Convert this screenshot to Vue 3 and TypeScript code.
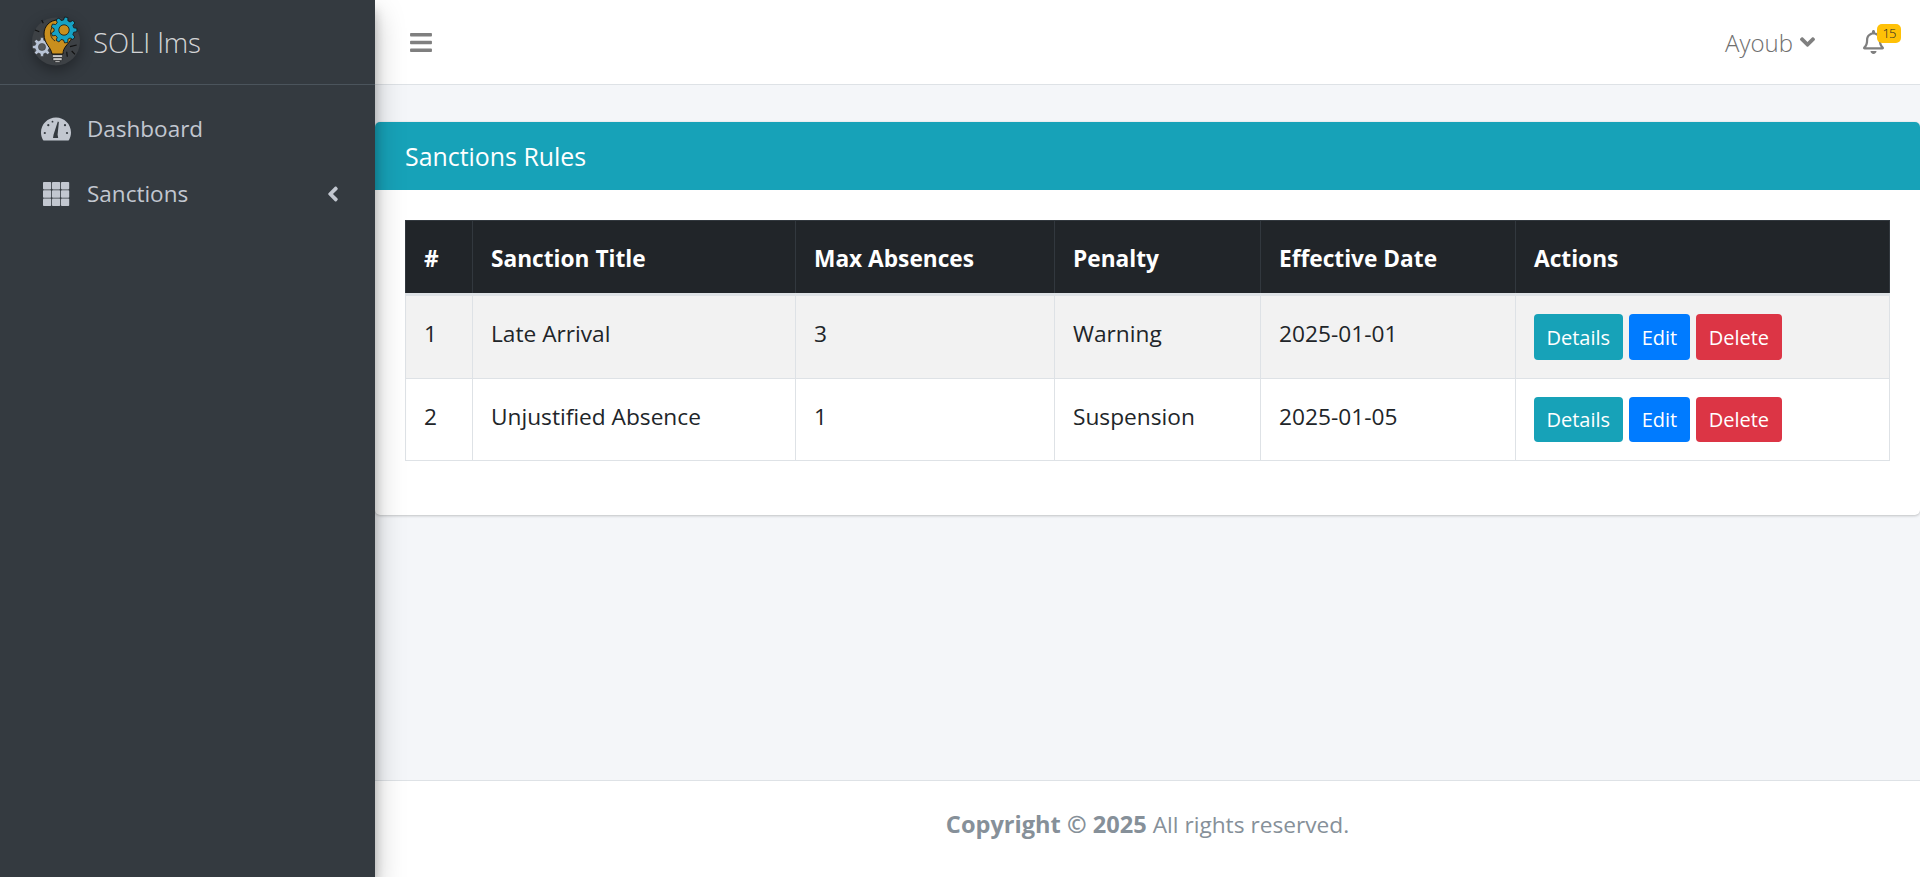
<script setup lang="ts">
interface Rule { id: number; title: string; max: number; penalty: string; date: string }
const rules: Rule[] = [
  { id: 1, title: 'Late Arrival', max: 3, penalty: 'Warning', date: '2025-01-01' },
  { id: 2, title: 'Unjustified Absence', max: 1, penalty: 'Suspension', date: '2025-01-05' },
]

function gear(cx: number, cy: number, ro: number, ri: number, n: number): string {
  const pts: string[] = []
  const step = (Math.PI * 2) / n
  for (let i = 0; i < n; i++) {
    const a = i * step
    const seq: [number, number][] = [
      [ri, a - step * 0.32],
      [ro, a - step * 0.18],
      [ro, a + step * 0.18],
      [ri, a + step * 0.32],
    ]
    for (const [r, t] of seq) {
      pts.push(`${(cx + r * Math.cos(t)).toFixed(2)} ${(cy + r * Math.sin(t)).toFixed(2)}`)
    }
  }
  return `M${pts.join('L')}Z`
}
const blueGear = gear(36, 16, 13, 10, 9)
const greyGear = gear(14, 33, 9.5, 7, 8)
</script>

<template>
  <div class="wrapper">
    <aside class="sidebar">
      <div class="brand">
        <svg class="logo" viewBox="0 0 56 56">
          <circle cx="28" cy="27.5" r="24" fill="#3d4145" />
          <g fill="none" stroke="#111" stroke-width="1.2">
            <path d="M7 16l4.3 1.7M13.7 6l1.6 3.3M42 32.7l6.7-1.7M38.7 37.7l.6 5M43.7 37l3.3 3.3" />
          </g>
          <path :d="greyGear" fill="#b9c4d6" stroke="#333" stroke-width=".5" />
          <circle cx="14" cy="33" r="3.6" fill="#565a5e" stroke="#333" stroke-width=".5" />
          <path d="M24 40C23 33 16 30 16 20 16 12 22 6 30 6c6 0 8 2 10 4l4 14c-4 7-9 9-9 16z" fill="#c98f1e" stroke="#111" stroke-width="1" />
          <path d="M25 12c-4 5-3 12 2 15" fill="none" stroke="#111" stroke-width=".8" />
          <path :d="blueGear" fill="#17a2c4" stroke="#111" stroke-width=".8" />
          <circle cx="36" cy="16" r="5.2" fill="#c98f1e" stroke="#111" stroke-width=".8" />
          <path d="M24.5 41h10v2.2h-10zM25 44h9v2.2h-9zM27 46.8h5v1.4h-5z" fill="#e8e8e8" stroke="#111" stroke-width=".5" />
        </svg>
        <span class="brand-text">SOLI lms</span>
      </div>
      <nav class="menu">
        <a class="item">
          <svg class="item-icon" viewBox="0 0 30 23">
            <path d="M15 0C6.7 0 0 6.7 0 15c0 2.8.8 5.4 2 7.5.3.4.8.5 1.3.5h23.4c.5 0 1-.1 1.3-.5 1.2-2.1 2-4.7 2-7.5C30 6.7 23.3 0 15 0z" />
            <g fill="#343a40">
              <circle cx="7.3" cy="7.7" r="1.1" />
              <circle cx="11.5" cy="4.2" r=".9" />
              <circle cx="24" cy="7.7" r="1.1" />
              <circle cx="3.8" cy="15.5" r="1.1" />
              <circle cx="26" cy="15.5" r="1.1" />
              <path d="M12 20.5l.6-3.5L16.8 4l1.1.4-1.3 12.8.6 3.3z" />
            </g>
          </svg>
          <span>Dashboard</span>
        </a>
        <a class="item">
          <svg class="item-icon" viewBox="0 0 30 24">
            <g>
              <rect x="2" y="0" width="8.2" height="7.4" rx=".8" />
              <rect x="11" y="0" width="8.2" height="7.4" rx=".8" />
              <rect x="20" y="0" width="8.2" height="7.4" rx=".8" />
              <rect x="2" y="8.3" width="8.2" height="7.4" rx=".8" />
              <rect x="11" y="8.3" width="8.2" height="7.4" rx=".8" />
              <rect x="20" y="8.3" width="8.2" height="7.4" rx=".8" />
              <rect x="2" y="16.6" width="8.2" height="7.4" rx=".8" />
              <rect x="11" y="16.6" width="8.2" height="7.4" rx=".8" />
              <rect x="20" y="16.6" width="8.2" height="7.4" rx=".8" />
            </g>
          </svg>
          <span>Sanctions</span>
          <svg class="angle" viewBox="0 0 256 512"><path d="M31.7 239l136-136c9.4-9.4 24.6-9.4 33.9 0l22.6 22.6c9.4 9.4 9.4 24.6 0 33.9L127.9 256l96.4 96.4c9.4 9.4 9.4 24.6 0 33.9L201.7 409c-9.4 9.4-24.6 9.4-33.9 0l-136-136c-9.5-9.4-9.5-24.6-.1-34z" /></svg>
        </a>
      </nav>
    </aside>

    <div class="main">
      <header class="navbar">
        <svg class="bars" viewBox="0 0 448 512"><path d="M16 132h416c8.837 0 16-7.163 16-16V76c0-8.837-7.163-16-16-16H16C7.163 60 0 67.163 0 76v40c0 8.837 7.163 16 16 16zm0 160h416c8.837 0 16-7.163 16-16v-40c0-8.837-7.163-16-16-16H16c-8.837 0-16 7.163-16 16v40c0 8.837 7.163 16 16 16zm0 160h416c8.837 0 16-7.163 16-16v-40c0-8.837-7.163-16-16-16H16c-8.837 0-16 7.163-16 16v40c0 8.837 7.163 16 16 16z" /></svg>
        <div class="user">
          <span>Ayoub</span>
          <svg class="chev" viewBox="0 0 320 512"><path d="M143 352.3L7 216.3c-9.4-9.4-9.4-24.6 0-33.9l22.6-22.6c9.4-9.4 24.6-9.4 33.9 0l96.4 96.4 96.4-96.4c9.4-9.4 24.6-9.4 33.9 0l22.6 22.6c9.4 9.4 9.4 24.6 0 33.9l-136 136c-9.2 9.4-24.4 9.4-33.8 0z" /></svg>
        </div>
        <div class="bell">
          <svg class="bell-icon" viewBox="0 0 448 512"><path d="M439.39 362.29c-19.32-20.76-55.47-51.99-55.47-154.29 0-77.7-54.48-139.9-127.94-155.16V32c0-17.67-14.32-32-31.98-32s-31.98 14.33-31.98 32v20.84C118.56 68.1 64.08 130.3 64.08 208c0 102.3-36.15 133.53-55.47 154.29-6 6.45-8.66 14.16-8.61 21.71.11 16.4 12.98 32 32.1 32h383.8c19.12 0 32-15.6 32.1-32 .05-7.55-2.61-15.27-8.61-21.71zM67.53 368c21.22-27.97 44.42-74.33 44.53-159.42 0-.2-.06-.38-.06-.58 0-61.86 50.14-112 112-112s112 50.14 112 112c0 .2-.06.38-.06.58.11 85.1 23.31 131.46 44.53 159.42H67.53zM224 512c35.32 0 63.97-28.65 63.97-64H160.03c0 35.35 28.65 64 63.97 64z" /></svg>
          <span class="badge">15</span>
        </div>
      </header>

      <main class="content">
        <section class="card">
          <h3 class="card-header">Sanctions Rules</h3>
          <div class="card-body">
            <table class="table">
              <thead>
                <tr>
                  <th class="c1">#</th>
                  <th class="c2">Sanction Title</th>
                  <th class="c3">Max Absences</th>
                  <th class="c4">Penalty</th>
                  <th class="c5">Effective Date</th>
                  <th>Actions</th>
                </tr>
              </thead>
              <tbody>
                <tr v-for="r in rules" :key="r.id">
                  <td>{{ r.id }}</td>
                  <td>{{ r.title }}</td>
                  <td>{{ r.max }}</td>
                  <td>{{ r.penalty }}</td>
                  <td>{{ r.date }}</td>
                  <td class="actions">
                    <button class="btn info">Details</button>
                    <button class="btn primary">Edit</button>
                    <button class="btn danger">Delete</button>
                  </td>
                </tr>
              </tbody>
            </table>
          </div>
        </section>
      </main>

      <footer class="footer"><strong>Copyright © 2025</strong> All rights reserved.</footer>
    </div>
  </div>
</template>

<style>
html, body { margin: 0; padding: 0; }
</style>

<style scoped>
.wrapper {
  display: flex;
  height: 877px;
  overflow: hidden;
  font-family: "Open Sans", "Noto Sans", sans-serif;
  font-size: 20px;
  color: #212529;
  background: #f4f6f9;
}
.sidebar {
  width: 375px;
  flex: none;
  background: #343a40;
  position: relative;
  z-index: 2;
  box-shadow: 0 14px 28px rgba(0, 0, 0, .25), 0 10px 10px rgba(0, 0, 0, .22);
}
.brand {
  height: 85px;
  box-sizing: border-box;
  border-bottom: 1px solid #4b545c;
  display: flex;
  align-items: center;
  padding-left: 28px;
  gap: 9px;
}
.logo {
  width: 56px;
  height: 56px;
  filter: drop-shadow(0 5px 7px rgba(0, 0, 0, .35));
}
.brand-text {
  font-size: 27.6px;
  font-weight: 300;
  color: rgba(255, 255, 255, .8);
}
.menu {
  padding-top: 11px;
  display: flex;
  flex-direction: column;
}
.item {
  height: 65px;
  display: flex;
  align-items: center;
  padding-left: 41px;
  color: #c2c7d0;
  font-size: 22.5px;
}
.item span { margin-left: 16px; }
.item-icon {
  width: 30px;
  height: 24px;
  fill: #c2c7d0;
}
.angle {
  width: 12px;
  height: 24px;
  fill: #c2c7d0;
  margin-left: auto;
  margin-right: 36px;
}
.main {
  flex: 1;
  min-width: 0;
  display: flex;
  flex-direction: column;
}
.navbar {
  height: 85px;
  box-sizing: border-box;
  flex: none;
  background: #fff;
  border-bottom: 1px solid #dee2e6;
  display: flex;
  align-items: center;
  padding: 0 36px 0 35px;
  color: rgba(0, 0, 0, .5);
}
.bars { width: 22px; height: 25px; fill: #7f7f7f; }
.user {
  margin-left: auto;
  display: flex;
  align-items: center;
  gap: 7px;
  font-size: 24px;
  font-weight: 300;
  color: #6f6f6f;
}
.chev { width: 15px; height: 24px; fill: #7f7f7f; }
.bell { position: relative; margin-left: 48px; display: flex; }
.bell-icon { width: 21px; height: 24px; fill: #7f7f7f; }
.badge {
  position: absolute;
  right: -17px;
  top: -6px;
  width: 24px;
  height: 19px;
  line-height: 19px;
  text-align: center;
  background: #ffc107;
  border-radius: 5px;
  font-size: 13px;
  font-weight: 300;
  letter-spacing: -1px;
  color: #212529;
}
.content {
  flex: 1;
  padding-top: 37px;
}
.card {
  background: #fff;
  border-radius: 5px;
  box-shadow: 0 0 1px rgba(0, 0, 0, .125), 0 1px 3px rgba(0, 0, 0, .2);
  overflow: hidden;
}
.card-header {
  margin: 0;
  height: 68px;
  box-sizing: border-box;
  padding: 0 30px;
  display: flex;
  align-items: center;
  background: #17a2b8;
  color: #fff;
  font-size: 24.9px;
  font-weight: 400;
}
.card-body { padding: 30px 30px 54px; }
.table {
  width: 100%;
  border-collapse: collapse;
  table-layout: fixed;
  font-size: 22.7px;
}
th {
  height: 74px;
  box-sizing: border-box;
  background: #212529;
  color: #fff;
  border: 1px solid #32383e;
  border-bottom: 3px solid #dee2e6;
  text-align: left;
  padding: 2px 18px 0;
  font-weight: 700;
}
.c1 { width: 67px; }
.c2 { width: 323px; }
.c3 { width: 259px; }
.c4 { width: 206px; }
.c5 { width: 255px; }
td {
  border: 1px solid #dee2e6;
  padding: 20px 18px 0;
  vertical-align: top;
  line-height: 36px;
}
tbody tr:nth-child(odd) td { background: #f2f2f2; }
tbody tr:nth-child(even) .btn { height: 45px; }
td.actions { padding: 18px; line-height: 0; }
.btn {
  border: 0;
  height: 46px;
  padding: 0 12.5px;
  margin-right: 6px;
  border-radius: 4px;
  color: #fff;
  font-family: inherit;
  font-size: 20px;
}
.info { background: #17a2b8; }
.primary { background: #007bff; padding: 0 13px; }
.danger { background: #dc3545; }
.footer {
  height: 97px;
  flex: none;
  box-sizing: border-box;
  padding-bottom: 10px;
  background: #fff;
  border-top: 1px solid #dee2e6;
  display: flex;
  justify-content: center;
  align-items: center;
  gap: 6px;
  font-size: 22.7px;
  color: #869099;
}
.footer strong { font-size: 23.6px; }
</style>
